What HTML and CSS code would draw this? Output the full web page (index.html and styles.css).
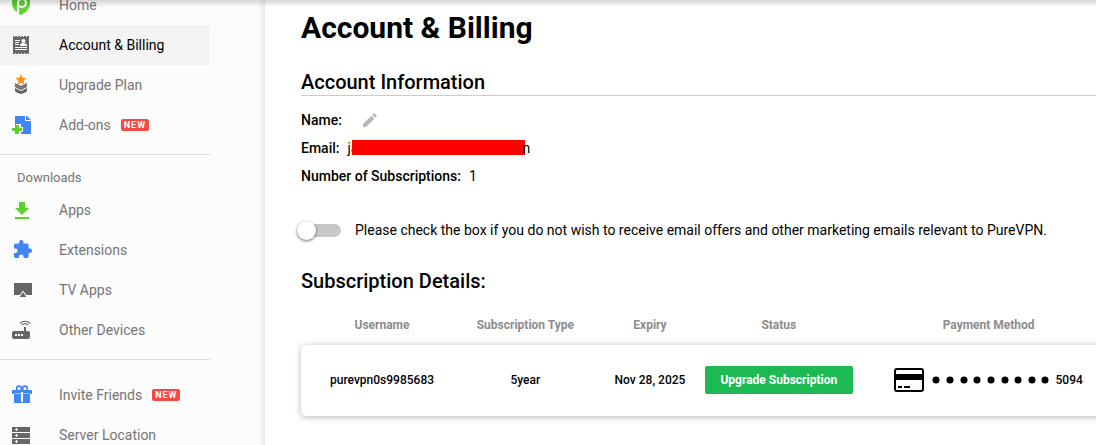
FILE: index.html
```html
<!DOCTYPE html>
<html lang="en">
<head>
<meta charset="utf-8">
<title>Account &amp; Billing</title>
<link rel="stylesheet" href="styles.css">
</head>
<body>
<div class="layout">
  <nav class="sidebar">
    <ul class="menu">
      <li><a class="item" href="#">
        <svg class="icon" viewBox="0 0 20 20"><path fill="#5bd02e" d="M0 0h18v8c0 5-4 9.500-9 12C4 17.500 0 13 0 8z"/><path fill="none" stroke="#fcfcfc" stroke-width="2.200" d="M6 19V8a4 4 0 1 1 4 4c-1.500 0-2-.5-2-1.500"/></svg>
        Home</a></li>
      <li><a class="item active" href="#">
        <svg class="icon" viewBox="0 0 20 20"><path fill="#666" d="M1 1h1v1h1V1h2v1h1V1h2v1h1V1h2v1h1V1h2v1h1V1h2v18h-1v-1h-1v1h-2v-1h-1v1h-2v-1H9v1H7v-1H6v1H4v-1H3v1H1z"/><g fill="#fff"><circle cx="11.500" cy="6" r="2"/><path d="M8 11c0-2 1-3 3.500-3s3.500 1 3.500 3zM3 5h5v1H3zM3 7h4v1H3zM3 9h4v1H3zM3 12h12v1H3zM3 14h12v1H3z"/></g></svg>
        Account &amp; Billing</a></li>
      <li><a class="item" href="#">
        <svg class="icon" viewBox="0 0 20 20"><path fill="#f7931e" d="m9-1 1.600 3.700 3.900.4-2.900 2.700.8 3.900L9 7.700 5.600 9.700l.8-3.900-2.900-2.700 3.900-.4z"/><path fill="#666" d="m3 8 6 3 6-3v4l-6 3-6-3zM3 13l6 3 6-3v3c-1 1.500-4 2.500-6 3-2-.5-5-1.500-6-3z"/><path fill="none" stroke="#aaa" stroke-width=".6" d="m3 10 6 3 6-3"/></svg>
        Upgrade Plan</a></li>
      <li><a class="item" href="#">
        <svg class="icon" viewBox="0 0 20 20"><path fill="#4285f4" d="M3 1h10v5h6v13H9v-2h2v-5H9v-3H4v2H3z"/><path fill="#4285f4" d="M14 1h1l4 4h-5z"/><path fill="#5bd02e" d="M3 10h4v3h3v3H7v3H3v-3H0v-3h3z"/></svg>
        Add-ons <span class="badge">NEW</span></a></li>
    </ul>
    <h2 class="group">Downloads</h2>
    <ul class="menu">
      <li><a class="item" href="#">
        <svg class="icon" viewBox="0 0 20 20"><path fill="#5bd02e" d="M7 2h6v6h4l-7 7-7-7h4zM3 17h14v2H3z"/></svg>
        Apps</a></li>
      <li><a class="item" href="#">
        <svg class="icon" viewBox="0 0 20 20"><path fill="#4285f4" transform="scale(.86) translate(.3 -1)" d="M20.500 11H19V7c0-1.100-.9-2-2-2h-4V3.500a2.500 2.500 0 0 0-5 0V5H4a2 2 0 0 0-2 2v3.800h1.500a2.700 2.700 0 0 1 0 5.400H2V20c0 1.100.9 2 2 2h3.800v-1.500a2.700 2.700 0 0 1 5.400 0V22H17a2 2 0 0 0 2-2v-4h1.500a2.500 2.500 0 0 0 0-5z"/></svg>
        Extensions</a></li>
      <li><a class="item" href="#">
        <svg class="icon" viewBox="0 0 20 20"><path fill="#666" d="M2 3h18v12H2z"/><path fill="#fcfcfc" d="m11 10.500 4 5.500H7z"/><path fill="#666" d="m11 12 3.300 5H7.700z"/></svg>
        TV Apps</a></li>
      <li><a class="item" href="#">
        <svg class="icon" viewBox="0 0 20 20"><path fill="#666" d="M2 11h10V7h2v4h2q2 0 2 2v4q0 2-2 2H2q-2 0-2-2v-4q0-2 2-2z"/><path fill="#fff" d="M3 14h2v2H3zM6 14h2v2H6zM9 14h2v2H9z"/><path fill="none" stroke="#666" stroke-width="1.200" d="M8 3.500c2.500-3 7.500-3 10 0M10 5.200c1.500-2 4.500-2 6 0"/></svg>
        Other Devices</a></li>
    </ul>
    <ul class="menu last">
      <li><a class="item" href="#">
        <svg class="icon" viewBox="0 0 20 20"><g fill="#4285f4"><path d="M0 5h20v4H0zM2 9h16v9H2z"/></g><g fill="none" stroke="#4285f4" stroke-width="1.600"><circle cx="7" cy="3.500" r="2.400"/><circle cx="13" cy="3.500" r="2.400"/></g><path fill="#fff" d="M9 7h2v10H9z"/><path fill="#a9c8fb" d="M2 8h16v1H2z"/></svg>
        Invite Friends <span class="badge">NEW</span></a></li>
      <li><a class="item" href="#">
        <svg class="icon" viewBox="0 0 20 20"><path fill="#666" d="M0 2h18v5H0zM0 8h18v5H0zM0 14h18v5H0z"/><path fill="#fff" d="M4 3h1v1h1v1H5v1H4V5H3V4h1zM4 9h1v1h1v1H5v1H4v-1H3v-1h1zM4 15h1v1h1v1H5v1H4v-1H3v-1h1z"/></svg>
        Server Location</a></li>
    </ul>
  </nav>
  <main class="content">
    <h1 class="title">Account &amp; Billing</h1>
    <h2 class="heading ruled">Account Information</h2>
    <dl class="info">
      <div class="row"><dt>Name:</dt><dd><button class="edit" type="button" aria-label="Edit name"><svg class="pencil" viewBox="0 0 14 14"><path fill="#b5b5b5" d="M0 11 8.300 2.700l3 3L3 14H0zM9.200 1.800 11 0l3 3-1.800 1.800z"/></svg></button></dd></div>
      <div class="row"><dt>Email:</dt><dd class="email">ja<span class="redacted"></span>n</dd></div>
      <div class="row"><dt>Number of Subscriptions:</dt><dd>1</dd></div>
    </dl>
    <div class="optout">
      <input class="switch" type="checkbox" id="optout">
      <label for="optout">Please check the box if you do not wish to receive email offers and other marketing emails relevant to PureVPN.</label>
    </div>
    <h2 class="heading">Subscription Details:</h2>
    <table class="subs">
      <thead>
        <tr><th class="c-user">Username</th><th class="c-type">Subscription Type</th><th class="c-type">Expiry</th><th class="c-status">Status</th><th>Payment Method</th></tr>
      </thead>
      <tbody>
        <tr class="card"><td>purevpn0s9985683</td><td>5year</td><td>Nov 28, 2025</td>
          <td><div class="action"><button class="upgrade" type="button">Upgrade Subscription</button></div></td>
          <td><div class="payment"><svg class="cc" viewBox="0 0 30 24"><rect x="1" y="1" width="28" height="22" rx="2" fill="#fff" stroke="#000" stroke-width="2"/><path d="M1 6h28v6H1zM4 18h4v2H4zM10 18h6v2h-6z"/></svg><svg class="dots" viewBox="0 0 118 8"><circle cx="4" cy="4" r="3.500"/><circle cx="18" cy="4" r="3.500"/><circle cx="32" cy="4" r="3.500"/><circle cx="45" cy="4" r="3.500"/><circle cx="59" cy="4" r="3.500"/><circle cx="73" cy="4" r="3.500"/><circle cx="86" cy="4" r="3.500"/><circle cx="100" cy="4" r="3.500"/><circle cx="113" cy="4" r="3.500"/></svg>5094</div></td></tr>
      </tbody>
    </table>
  </main>
</div>
</body>
</html>
```
FILE: styles.css
```css
* { box-sizing: border-box; }
body {
  margin: 0;
  background: #fff;
  color: #000;
  font: 500 14px/20px Roboto, "Liberation Sans", sans-serif;
}
body::before {
  content: "";
  position: fixed;
  inset: 0 0 auto;
  z-index: 1;
  height: 7px;
  background: linear-gradient(rgba(0, 0, 0, .16), rgba(0, 0, 0, 0));
}
.layout {
  display: flex;
  height: 100vh;
  overflow: hidden;
}
.sidebar {
  flex: 0 0 265px;
  margin-top: -15px;
  background: linear-gradient(to left, #ececec, #fcfcfc 7px);
}
.menu {
  width: 210px;
  margin: 0;
  padding: 0 0 9px;
  list-style: none;
  border-bottom: 1px solid #dcdcdc;
}
.menu.last { padding-top: 15px; border: 0; }
.item {
  display: flex;
  align-items: center;
  height: 40px;
  padding: 0 0 1px 12px;
  color: #757575;
  font-weight: 400;
  text-decoration: none;
}
.item.active { background: #f4f4f4; color: #000; }
.icon { width: 20px; height: 20px; margin-right: 27px; overflow: visible; }
.badge {
  margin-left: 10px;
  padding: 0 3px;
  border-radius: 2px;
  background: #f44a43;
  color: #fff;
  font-size: 9px;
  font-weight: 700;
  line-height: 12px;
  letter-spacing: 1px;
}
.group {
  margin: 0;
  padding: 13px 0 2px 17px;
  color: #757575;
  font-size: 13px;
  font-weight: 400;
}
.content {
  flex: 1;
  min-width: 0;
  padding: 10px 0 0 36px;
}
.title { margin: 0 0 26px; font-size: 30px; line-height: 36px; font-weight: 700; }
.heading { margin: 0; font-size: 20px; line-height: 20px; font-weight: 500; }
.ruled { padding-bottom: 3px; border-bottom: 1px solid #ccc; }
.info { margin: 14px 0 34px; }
.row { display: flex; align-items: center; gap: 8px; height: 20px; margin-bottom: 8px; }
.row dd { margin: 0; font-weight: 400; }
.email { display: flex; align-items: center; }
.redacted { width: 173px; height: 15px; margin: 0 -3px 2px -6px; background: #f00; }
.edit { display: block; margin-left: 13px; padding: 0; border: 0; background: none; }
.pencil { display: block; width: 14px; height: 14px; }
.optout {
  display: flex;
  align-items: center;
  gap: 14px;
  height: 20px;
  margin-bottom: 31px;
  font-weight: 400;
}
.switch {
  appearance: none;
  flex: none;
  display: flex;
  align-items: center;
  width: 40px;
  height: 13px;
  margin: 0;
  border-radius: 7px;
  background: #c8c8c8;
}
.switch::before {
  content: "";
  width: 19px;
  height: 19px;
  margin-left: -4px;
  border-radius: 50%;
  background: #fff;
  box-shadow: 0 1px 3px rgba(0, 0, 0, .6);
}
.subs {
  width: calc(100% + 36px);
  margin-top: 24px;
  table-layout: fixed;
  border-spacing: 0;
  font-size: 12px;
  text-align: center;
}
.subs th { height: 30px; padding: 0 0 10px; color: #8c8c8c; font-size: 12px; font-weight: 700; }
.subs td { height: 71px; padding: 0 0 2px; }
.c-user { width: 19.5%; }
.c-type { width: 15%; }
.c-status { width: 16%; }
.card { border-radius: 5px; box-shadow: 0 1px 6px rgba(0, 0, 0, .3); }
.action { display: flex; justify-content: center; }
.upgrade {
  flex: none;
  width: 148px;
  height: 28px;
  padding: 0;
  border: 0;
  border-radius: 2px;
  background: #1db954;
  color: #fff;
  font: 700 12px Roboto, "Liberation Sans", sans-serif;
}
.payment { display: flex; align-items: center; justify-content: center; }
.cc { width: 30px; height: 24px; margin-right: 8px; }
.dots { width: 118px; height: 8px; margin-right: 5px; }
```
